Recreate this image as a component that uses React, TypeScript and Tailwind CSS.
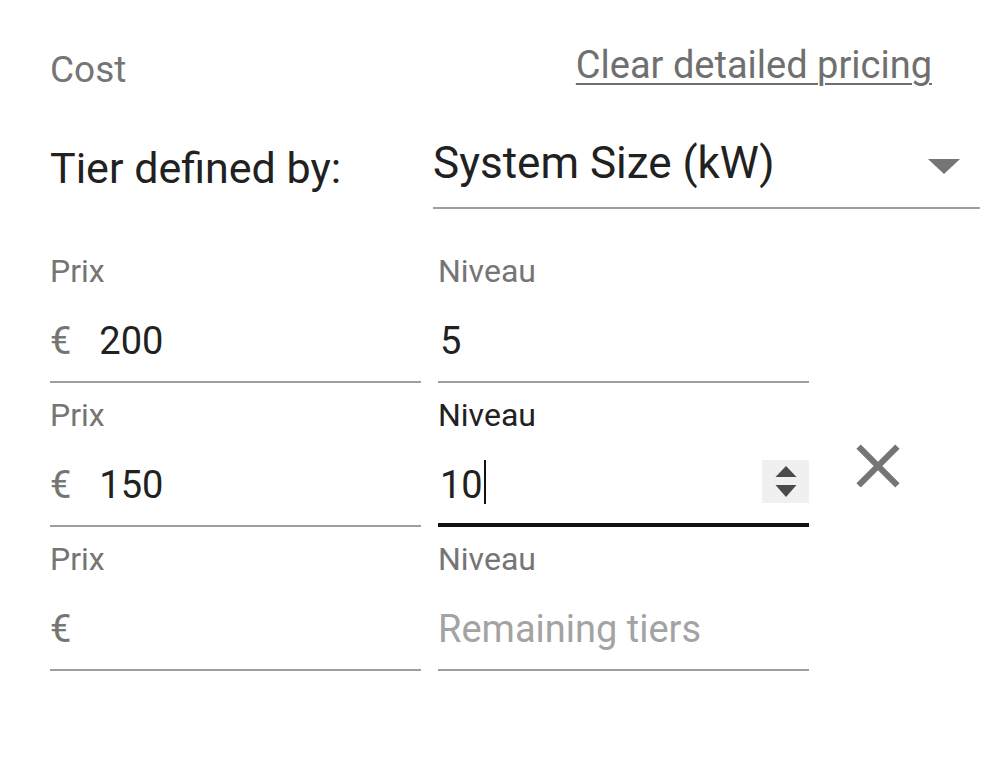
import React from "react";

type FieldProps = {
  label: string;
  value?: string;
  placeholder?: string;
  euro?: boolean;
  focused?: boolean;
  spinner?: boolean;
};

const Field = ({ label, value, placeholder, euro, focused, spinner }: FieldProps) => {
  return (
    <div
      className={
        "w-[371px] h-[128px] flex flex-col " +
        (focused ? "border-b-[4px] border-[#111111]" : "border-b-2 border-[#9e9e9e]")
      }
    >
      <p className={"text-[32px] leading-none " + (focused ? "text-[#212121]" : "text-[#757575]")}>
        {label}
      </p>
      <div className="mt-[35px] h-[38px] flex items-end">
        {euro && <span className="text-[38px] leading-none text-[#757575] mr-[26px]">€</span>}
        {value ? (
          <span className="text-[38px] leading-none text-[#212121] ml-[2px]">{value}</span>
        ) : (
          <span className="text-[38px] leading-none text-[#a3a3a3]">{placeholder}</span>
        )}
        {focused && <span className="w-[2px] h-[44px] bg-[#111111] ml-[1px]" />}
        {spinner && (
          <div className="ml-auto w-[47px] h-[43px] bg-[#f0f0f0] mb-[1px]">
            <svg width="47" height="43" viewBox="0 0 47 43">
              <polygon points="13.5,17 34.5,17 24,6" fill="#4a4a4a" />
              <polygon points="13.5,25 34.5,25 24,37" fill="#4a4a4a" />
            </svg>
          </div>
        )}
      </div>
    </div>
  );
};

const App = () => {
  return (
    <div className="w-[1008px] h-[784px] bg-white pl-[50px] pt-[46px] font-['Roboto',sans-serif]">
      <div className="w-[882px] flex items-start justify-between">
        <p className="text-[37px] leading-none text-[#757575] mt-[5px]">Cost</p>
        <button className="text-[38px] leading-none text-[#6f6f6f] underline underline-offset-[5px] decoration-2">
          Clear detailed pricing
        </button>
      </div>

      <div className="mt-[53px] flex items-start">
        <p className="w-[383px] text-[43px] leading-none text-[#212121] mt-[6px]">Tier defined by:</p>
        <div className="w-[547px] h-[68px] border-b-2 border-[#9e9e9e] flex items-start justify-between">
          <span className="text-[44px] leading-none text-[#212121]">System Size (kW)</span>
          <svg width="32" height="16" viewBox="0 0 32 16" className="mt-[18px] mr-[20px]">
            <polygon points="0,0 32,0 16,15" fill="#757575" />
          </svg>
        </div>
      </div>

      <div className="mt-[46px] flex flex-col gap-[16px]">
        <div className="flex items-start gap-[17px]">
          <Field label="Prix" value="200" euro />
          <Field label="Niveau" value="5" />
        </div>
        <div className="flex items-start gap-[17px]">
          <Field label="Prix" value="150" euro />
          <Field label="Niveau" value="10" focused spinner />
          <button className="ml-[15px] mt-[30px]">
            <svg width="74" height="74" viewBox="0 0 24 24">
              <path
                d="M19 6.41L17.59 5 12 10.59 6.41 5 5 6.41 10.59 12 5 17.59 6.41 19 12 13.41 17.59 19 19 17.59 13.41 12z"
                fill="#757575"
              />
            </svg>
          </button>
        </div>
        <div className="flex items-start gap-[17px]">
          <Field label="Prix" euro />
          <Field label="Niveau" placeholder="Remaining tiers" />
        </div>
      </div>
    </div>
  );
};

export default App;
